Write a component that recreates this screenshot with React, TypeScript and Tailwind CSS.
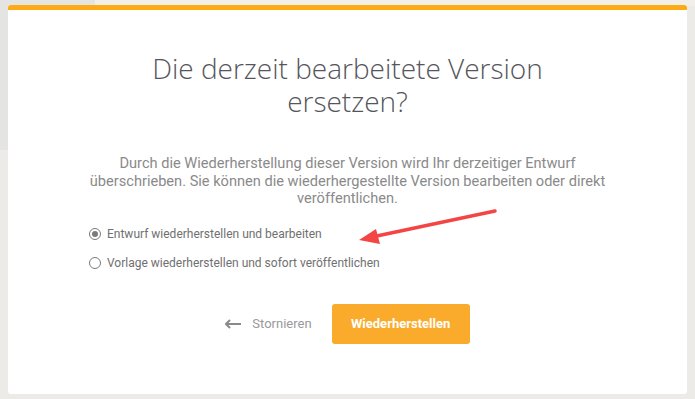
import React from "react";

export default function App() {
  return (
    <div className="w-[695px] h-[399px] overflow-hidden bg-[#ecebe8] relative" style={{ fontFamily: "Roboto, sans-serif" }}>
      <div className="absolute left-0 top-0 w-[95px] h-[150px] bg-[#e4e4e2]" />
      <div className="absolute left-[95px] top-0 w-[600px] h-[6px] bg-[#f1efe8]" />
      <div className="relative ml-[8px] mt-[5px] w-[679px] h-[389px] bg-white rounded-[3px] overflow-hidden flex flex-col items-center">
        <div className="w-full h-[5px] bg-[#fdab14] shrink-0" />
        <h1
          className="mt-[42px] text-center text-[28px] leading-[33px] text-[#55555c] font-light w-[440px]"
          style={{ fontFamily: '"Open Sans", sans-serif' }}
        >
          Die derzeit bearbeitete Version ersetzen?
        </h1>
        <p className="mt-[37px] w-[522px] text-center text-[14.6px] leading-[17.5px] text-[#8a8a8a]">
          Durch die Wiederherstellung dieser Version wird Ihr derzeitiger Entwurf überschrieben. Sie können die wiederhergestellte Version bearbeiten oder direkt veröffentlichen.
        </p>
        <div className="self-start ml-[81px] mt-[18px] flex flex-col gap-[12px] text-[12px] text-[#707070]">
          <label className="flex items-center gap-[6px] h-[17px]">
            <span className="w-[12px] h-[12px] rounded-full border border-[#7a7a7a] flex items-center justify-center">
              <span className="w-[6px] h-[6px] rounded-full bg-[#7a7a7a]" />
            </span>
            Entwurf wiederherstellen und bearbeiten
          </label>
          <label className="flex items-center gap-[6px] h-[17px]">
            <span className="w-[12px] h-[12px] rounded-full border border-[#7a7a7a]" />
            Vorlage wiederherstellen und sofort veröffentlichen
          </label>
        </div>
        <div className="mt-[32px] flex items-center">
          <button className="flex items-center gap-[10px] text-[13px] text-[#9a9a9a] mr-[20px]">
            <svg width="17" height="10" viewBox="0 0 17 10">
              <path d="M1 5 H16 M5 1 L1 5 L5 9" stroke="#8a8a8a" strokeWidth="2" fill="none" />
            </svg>
            Stornieren
          </button>
          <button className="w-[138px] h-[40px] rounded-[3px] bg-[#fbab2c] text-white font-bold text-[13px]">
            Wiederherstellen
          </button>
        </div>
      </div>
      <svg className="absolute left-0 top-0" width="695" height="399">
        <line x1="495" y1="211" x2="372" y2="237" stroke="#f44545" strokeWidth="3.5" strokeLinecap="round" />
        <polygon points="359,240 376,229 380,244" fill="#f44545" />
      </svg>
    </div>
  );
}
